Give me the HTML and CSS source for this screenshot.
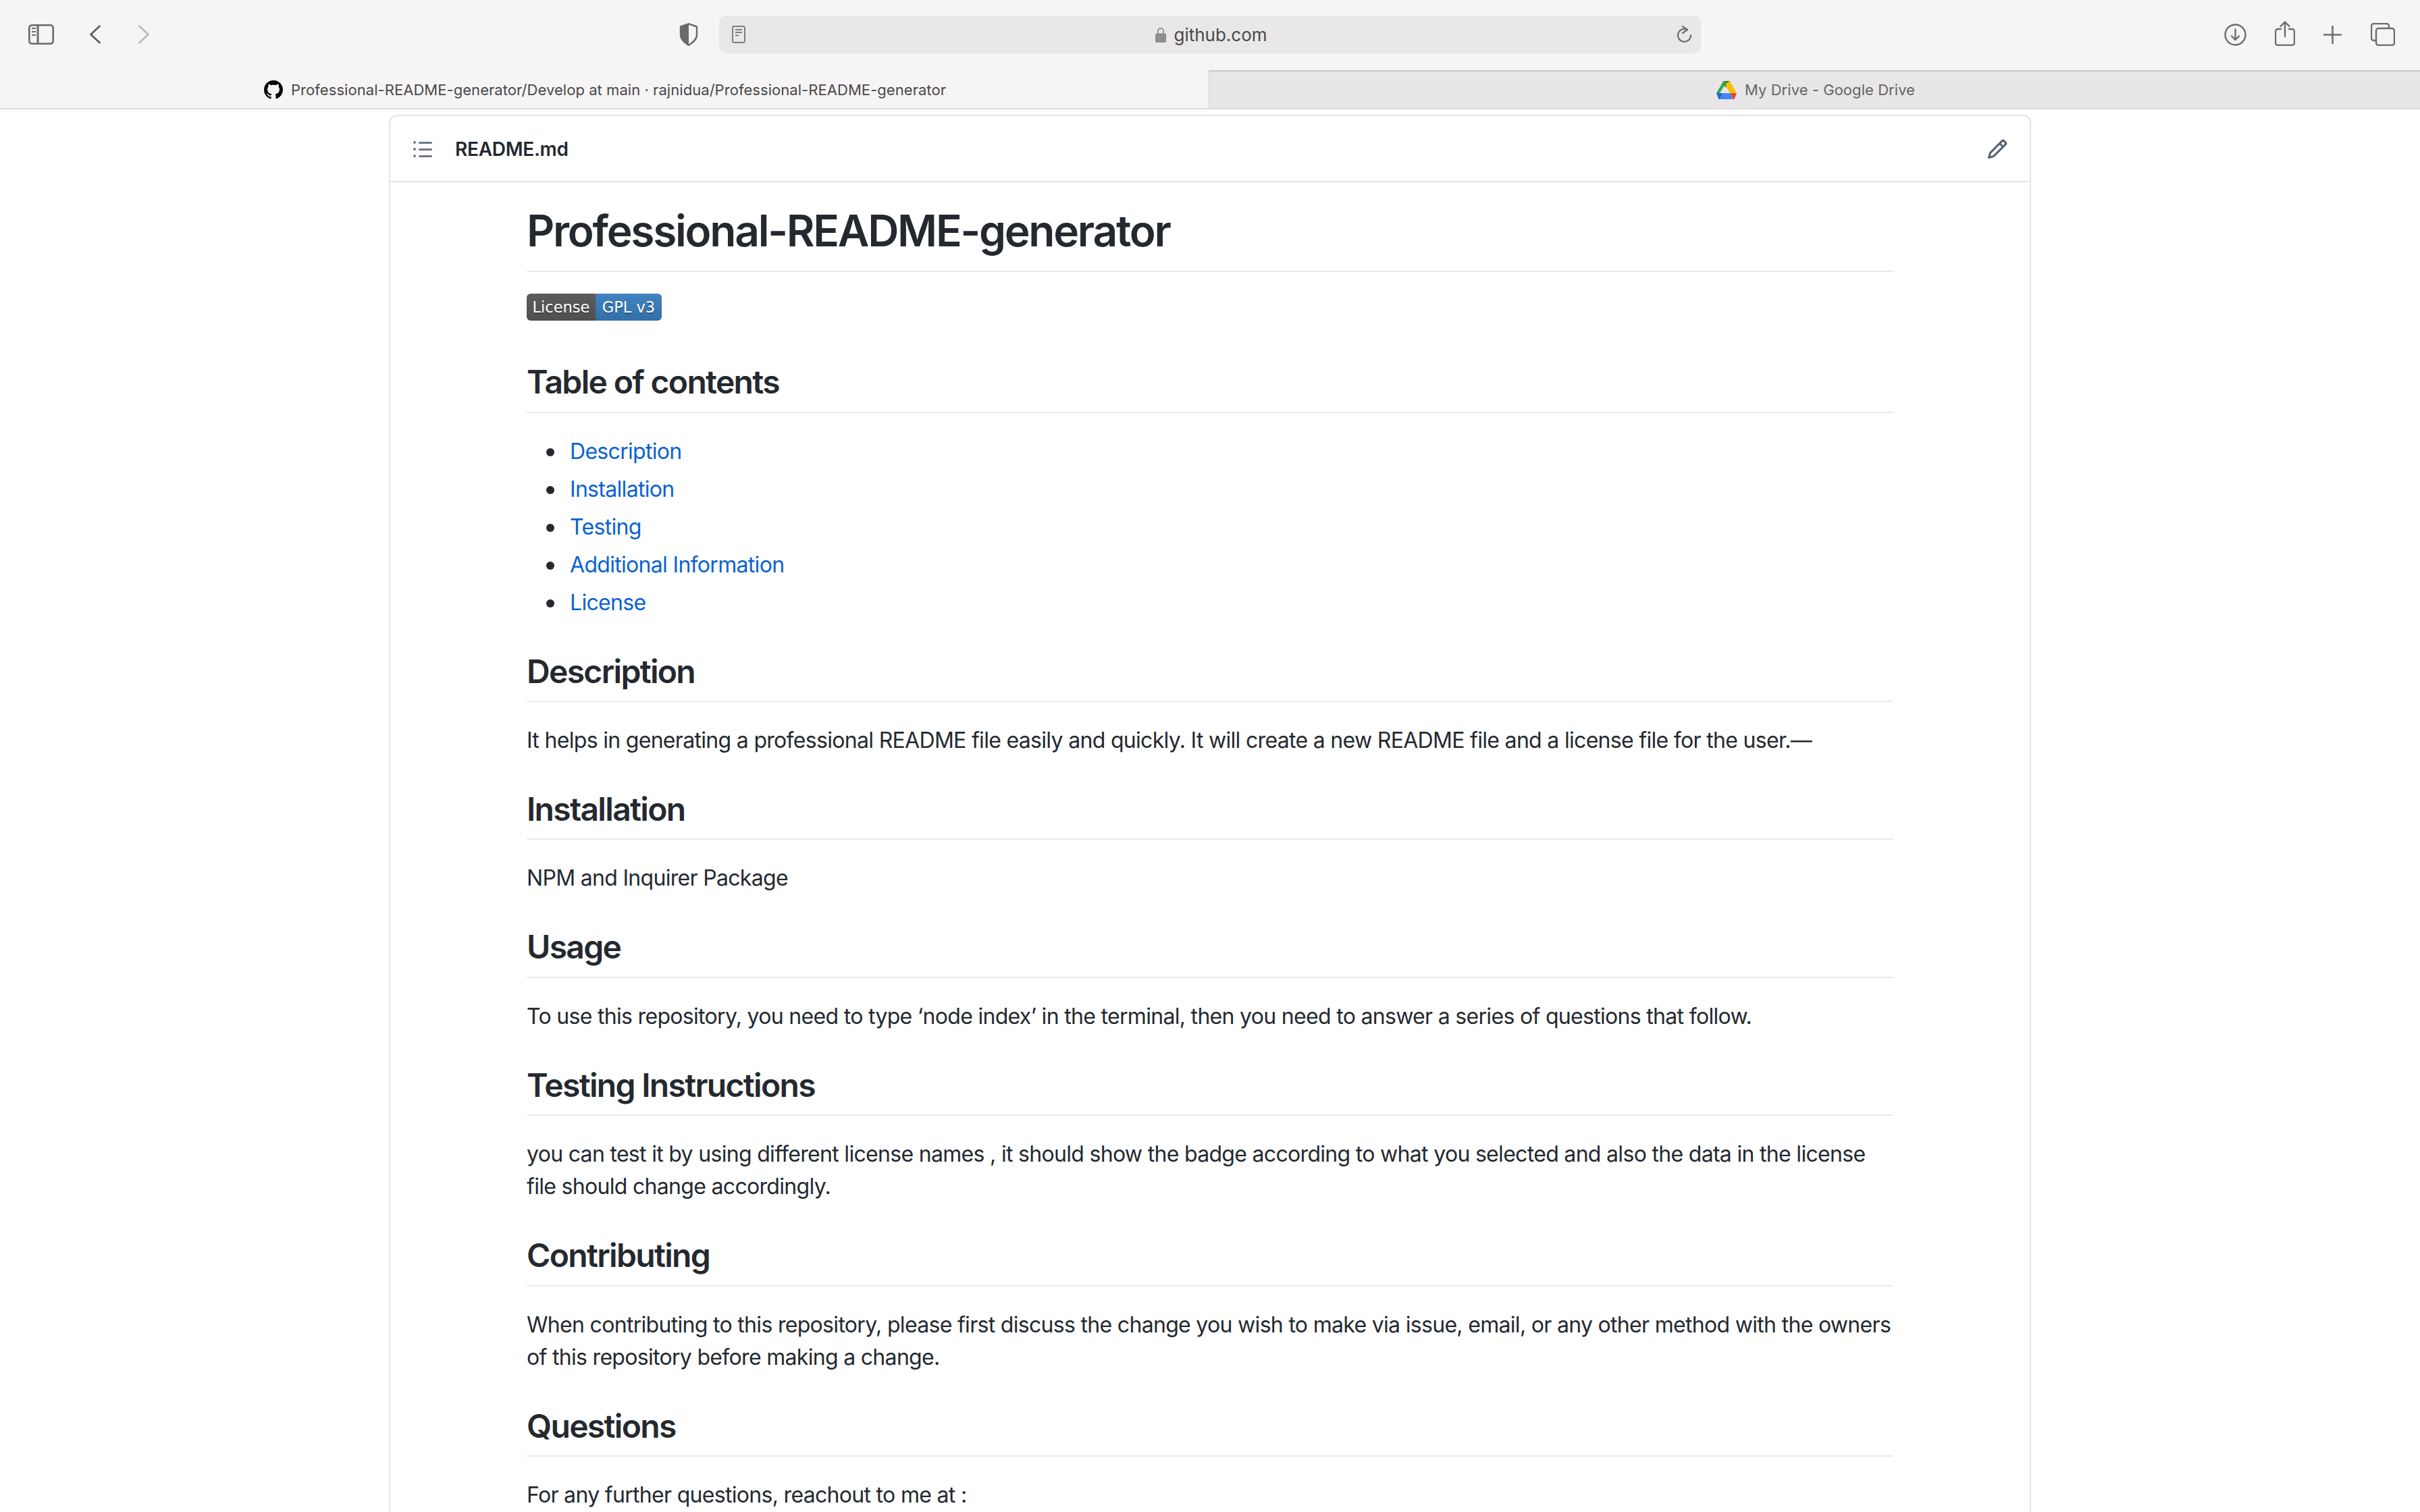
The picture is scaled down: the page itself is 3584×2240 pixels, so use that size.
FILE: index.html
```html
<!DOCTYPE html>
<html lang="en">
<head>
  <meta charset="UTF-8">
  <title>Professional-README-generator/Develop at main · rajnidua/Professional-README-generator</title>
  <link rel="stylesheet" href="styles.css">
</head>
<body>
  <header class="toolbar">
    <svg class="icon sidebar-icon" viewBox="0 0 38 30" fill="none" stroke="#6b696b" stroke-width="2.6">
      <rect x="1.3" y="1.3" width="35.4" height="27.4" rx="4"/>
      <path d="M14 1.3v27.4" stroke-width="3"/>
      <path d="M5 6h6M5 11h6M5 16h6" stroke-width="2.2"/>
    </svg>
    <svg class="icon back-icon" viewBox="0 0 18 28" fill="none" stroke="#5f5d5f" stroke-width="2.8" stroke-linecap="round" stroke-linejoin="round">
      <path d="M15.500 1.800 2.500 14l13 12.200"/>
    </svg>
    <svg class="icon forward-icon" viewBox="0 0 18 28" fill="none" stroke="#bdbbbd" stroke-width="2.8" stroke-linecap="round" stroke-linejoin="round">
      <path d="M2.500 1.800 15.500 14l-13 12.200"/>
    </svg>
    <svg class="icon shield-icon" viewBox="0 0 28 34">
      <path d="M14 1.300 26 5.500v12c0 7-6 11.500-12 15.500C8 29 2 24.500 2 17.500v-12z" fill="none" stroke="#6b696b" stroke-width="2.400" stroke-linejoin="round"/>
      <path d="M14 1.300 2 5.500v12c0 7 6 11.500 12 15.500z" fill="#6b696b"/>
    </svg>
    <div class="url-bar">
      <svg class="page-icon" viewBox="0 0 20 26" fill="none" stroke="#807e80" stroke-width="2">
        <rect x="1" y="1" width="18" height="24" rx="2.500"/>
        <path d="M5 6h10M5 10h10M5 14.500h5"/>
      </svg>
      <div class="url-text">
        <svg class="lock-icon" viewBox="0 0 16 23">
          <path d="M4 10V6a4 4 0 0 1 8 0v4" fill="none" stroke="#8f8d8f" stroke-width="1.800"/>
          <rect y="9.500" width="16" height="13.500" rx="2" fill="#8f8d8f"/>
        </svg>
        github.com
      </div>
      <svg class="reload-icon" viewBox="0 0 22 26" fill="none" stroke="#6e6c6e" stroke-width="2.200" stroke-linecap="round" stroke-linejoin="round">
        <path d="M15 6A9.500 9.500 0 1 0 20 14"/>
        <path d="M8 1.200l7 4.800-7 5"/>
      </svg>
    </div>
    <div class="toolbar-right">
      <svg class="icon download-icon" viewBox="0 0 33 33" fill="none" stroke="#6e6c6e" stroke-width="2.400" stroke-linecap="round" stroke-linejoin="round">
        <circle cx="16.500" cy="16.500" r="15"/>
        <path d="M16.500 8.500V24M11 18.500l5.500 5.500 5.500-5.500"/>
      </svg>
      <svg class="icon share-icon" viewBox="0 0 30 37" fill="none" stroke="#6e6c6e" stroke-width="2.400" stroke-linecap="round" stroke-linejoin="round">
        <path d="M9 12H4.500a3.500 3.500 0 0 0-3.500 3.500v17A3.500 3.500 0 0 0 4.500 36h21a3.500 3.500 0 0 0 3.500-3.500v-17a3.500 3.500 0 0 0-3.500-3.500H21"/>
        <path d="M15 23V1.500M8.500 8 15 1.500 21.500 8"/>
      </svg>
      <svg class="icon plus-icon" viewBox="0 0 27 27" fill="none" stroke="#6e6c6e" stroke-width="2.600" stroke-linecap="round">
        <path d="M13.500 1v25M1 13.500h25"/>
      </svg>
      <svg class="icon tabs-icon" viewBox="0 0 36 34" fill="none" stroke="#6e6c6e" stroke-width="2.400" stroke-linejoin="round">
        <path d="M7 26H4.500A3.500 3.500 0 0 1 1 22.500v-18A3.500 3.500 0 0 1 4.500 1h19A3.500 3.500 0 0 1 27 4.500V8"/>
        <rect x="8" y="8" width="27" height="25" rx="3.500"/>
      </svg>
    </div>
  </header>

  <nav class="tabs">
    <div class="tab tab-active">
      <svg class="favicon" viewBox="0 0 16 16" fill="#000">
        <path d="M8 0C3.58 0 0 3.58 0 8c0 3.54 2.29 6.53 5.47 7.59.4.07.55-.17.55-.38 0-.19-.01-.82-.01-1.49-2.01.37-2.53-.49-2.69-.94-.09-.23-.48-.94-.82-1.13-.28-.15-.68-.52-.01-.53.63-.01 1.08.58 1.23.82.72 1.21 1.87.87 2.33.66.07-.52.28-.87.51-1.07-1.78-.2-3.64-.89-3.64-3.95 0-.87.31-1.59.82-2.15-.08-.2-.36-1.02.08-2.12 0 0 .67-.21 2.2.82.64-.18 1.32-.27 2-.27.68 0 1.36.09 2 .27 1.53-1.04 2.2-.82 2.2-.82.44 1.1.16 1.92.08 2.12.51.56.82 1.27.82 2.15 0 3.07-1.87 3.75-3.65 3.95.29.25.54.73.54 1.48 0 1.07-.01 1.93-.01 2.2 0 .21.15.46.55.38A8.013 8.013 0 0016 8c0-4.42-3.58-8-8-8z"/>
      </svg>
      Professional-README-generator/Develop at main · rajnidua/Professional-README-generator
    </div>
    <div class="tab tab-inactive">
      <svg class="favicon" viewBox="0 0 30 27">
        <path d="M10.200 0h9.600L15 8.500 12.500 9z" fill="#188038"/>
        <path d="M10.200 0 0 18l5 0 10-17z" fill="#34a853"/>
        <path d="M19.800 0 30 18H20L13.500 6.500 15 3z" fill="#fbbc04"/>
        <path d="M0 18h10l-5 9H3.500z" fill="#1967d2"/>
        <path d="M5 27l5-9h10l5 9z" fill="#4285f4"/>
        <path d="M20 18h10l-3.500 9H25z" fill="#ea4335"/>
      </svg>
      My Drive - Google Drive
    </div>
  </nav>

  <main class="readme">
    <div class="readme-header">
      <svg class="list-icon" viewBox="0 0 16 16" fill="#6e7781">
        <path d="M2 4a1 1 0 100-2 1 1 0 000 2zm3.750-1.500a.75.75 0 000 1.500h8.500a.75.75 0 000-1.500h-8.500zm0 5a.75.75 0 000 1.500h8.500a.75.75 0 000-1.500h-8.500zm0 5a.75.75 0 000 1.500h8.500a.75.75 0 000-1.500h-8.500zM3 8a1 1 0 11-2 0 1 1 0 012 0zm-1 6a1 1 0 100-2 1 1 0 000 2z"/>
      </svg>
      <span class="readme-name">README.md</span>
      <svg class="pencil-icon" viewBox="0 0 16 16" fill="#57606a">
        <path d="M11.013 1.427a1.750 1.750 0 012.474 0l1.086 1.086a1.750 1.750 0 010 2.474l-8.610 8.610c-.21.21-.47.364-.756.445l-3.251.93a.75.75 0 01-.927-.928l.929-3.250a1.750 1.750 0 01.445-.758l8.610-8.610zm1.414 1.060a.25.25 0 00-.354 0L10.811 3.750l1.439 1.440 1.263-1.263a.25.25 0 000-.354l-1.086-1.086zM11.189 6.250L9.750 4.810l-6.286 6.287a.25.25 0 00-.064.108l-.558 1.953 1.953-.558a.249.249 0 00.108-.064l6.286-6.286z"/>
      </svg>
    </div>

    <article class="markdown">
      <h1>Professional-README-generator</h1>
      <p class="badge-line">
        <span class="badge">
          <span class="badge-label">License</span>
          <span class="badge-value">GPL v3</span>
        </span>
      </p>

      <h2>Table of contents</h2>
      <ul>
        <li><a href="#description">Description</a></li>
        <li><a href="#installation">Installation</a></li>
        <li><a href="#testing">Testing</a></li>
        <li><a href="#info">Additional Information</a></li>
        <li><a href="#license">License</a></li>
      </ul>

      <h2 id="description">Description</h2>
      <p>It helps in generating a professional README file easily and quickly. It will create a new README file and a license file for the user.—</p>

      <h2 id="installation">Installation</h2>
      <p>NPM and Inquirer Package</p>

      <h2>Usage</h2>
      <p>To use this repository, you need to type ‘node index’ in the terminal, then you need to answer a series of questions that follow.</p>

      <h2 id="testing">Testing Instructions</h2>
      <p>you can test it by using different license names , it should show the badge according to what you selected and also the data in the license file should change accordingly.</p>

      <h2>Contributing</h2>
      <p>When contributing to this repository, please first discuss the change you wish to make via issue, email, or any other method with the owners of this repository before making a change.</p>

      <h2 id="info">Questions</h2>
      <p>For any further questions, reachout to me at :</p>
    </article>
  </main>
</body>
</html>
```

FILE: styles.css
```css
html, body {
  margin: 0;
  height: 100%;
  overflow: hidden;
}
body {
  font-family: Inter, "Noto Sans", sans-serif;
  color: #24292f;
  background-color: white;
}
.icon {
  display: block;
  flex: none;
}

/* browser chrome */
.toolbar {
  display: flex;
  align-items: center;
  height: 104px;
  padding-bottom: 2px;
  box-sizing: border-box;
  background-color: #f6f4f5;
}
.sidebar-icon { width: 38px; height: 30px; margin-left: 42px; }
.back-icon { width: 18px; height: 28px; margin-left: 52px; }
.forward-icon { width: 18px; height: 28px; margin-left: 54px; }
.shield-icon { width: 28px; height: 34px; margin-left: 784px; }
.url-bar {
  display: flex;
  align-items: center;
  justify-content: space-between;
  width: 1454px;
  height: 56px;
  margin-left: 31px;
  padding: 0 13px 0 19px;
  box-sizing: border-box;
  background-color: #e9e7e8;
  border-radius: 10px;
}
.page-icon { width: 20px; height: 26px; }
.url-text {
  display: flex;
  align-items: center;
  gap: 11px;
  font-size: 26px;
  color: #4a484a;
}
.lock-icon { width: 16px; height: 23px; }
.reload-icon { width: 22px; height: 26px; }
.toolbar-right {
  display: flex;
  align-items: center;
  margin-left: 775px;
}
.download-icon { width: 33px; height: 33px; }
.share-icon { width: 30px; height: 37px; margin-left: 42px; margin-top: -4px; }
.plus-icon { width: 27px; height: 27px; margin-left: 42px; }
.tabs-icon { width: 36px; height: 34px; margin-left: 43px; }

.tabs {
  display: flex;
  height: 58px;
  box-sizing: border-box;
  border-bottom: 2px solid #dcdadb;
}
.tab {
  display: flex;
  align-items: center;
  justify-content: center;
  gap: 12px;
  font-size: 22px;
  letter-spacing: 0.05px;
}
.tab-active {
  width: 1790px;
  padding: 1px 0 0 2px;
  box-sizing: border-box;
  background-color: #f6f4f5;
  color: #4a484a;
}
.tab-inactive {
  flex: 1;
  padding-left: 3px;
  background-color: #e8e6e7;
  border-top: 2px solid #c9c7c8;
  border-left: 1px solid #d2d0d1;
  color: #666466;
}
.favicon { width: 28px; height: 28px; flex: none; }
.tab-inactive .favicon { width: 30px; height: 27px; }

/* readme box */
.readme {
  width: 2432px;
  box-sizing: border-box;
  margin: 8px 0 0 576px;
  border: 2px solid #e1e4e8;
  border-radius: 12px 12px 0 0;
}
.readme-header {
  display: flex;
  align-items: center;
  height: 98px;
  padding: 2px 32px 0;
  box-sizing: border-box;
  border-bottom: 2px solid #e1e4e8;
}
.list-icon { width: 32px; height: 32px; }
.readme-name {
  margin-left: 32px;
  font-size: 28px;
  font-weight: 600;
  letter-spacing: -0.01em;
}
.pencil-icon { width: 32px; height: 32px; margin-left: auto; }

.markdown {
  padding: 32px 202px 0;
  font-size: 32px;
  line-height: 48px;
  letter-spacing: -0.0215em;
}
h1, h2 {
  margin: 48px 0 32px;
  font-weight: 600;
  letter-spacing: -0.035em;
  border-bottom: 2px solid #e8eaed;
}
h1 {
  margin-top: 0;
  font-size: 64px;
  line-height: 80px;
  padding-bottom: 19.2px;
}
h2 {
  margin-bottom: 33px;
  font-size: 48px;
  line-height: 60px;
  padding-bottom: 13.4px;
}
p {
  margin: 0 0 32px;
}
ul {
  margin: 0 0 32px;
  padding-left: 64px;
  list-style: none;
}
li + li {
  margin-top: 8px;
}
li::before {
  content: "";
  display: inline-block;
  width: 12px;
  height: 12px;
  margin: 0 23px 0 -35px;
  vertical-align: 4px;
  border-radius: 50%;
  background-color: #24292f;
}
a {
  color: #0b62d2;
  text-decoration: none;
}

.badge-line {
  height: 53px;
}
.badge {
  display: flex;
  width: 200px;
  height: 40px;
  border-radius: 6px;
  overflow: hidden;
  font-family: "DejaVu Sans", sans-serif;
  font-size: 22.5px;
  line-height: 40px;
  letter-spacing: 0;
  color: white;
  text-shadow: 0 2px 0 rgba(1,1,1,0.3);
}
.badge-label {
  width: 102px;
  text-align: center;
  background: linear-gradient(#5c5c5c, #4f4f4f);
}
.badge-value {
  flex: 1;
  text-align: center;
  background: linear-gradient(#4183c0, #336fa9);
}
```
